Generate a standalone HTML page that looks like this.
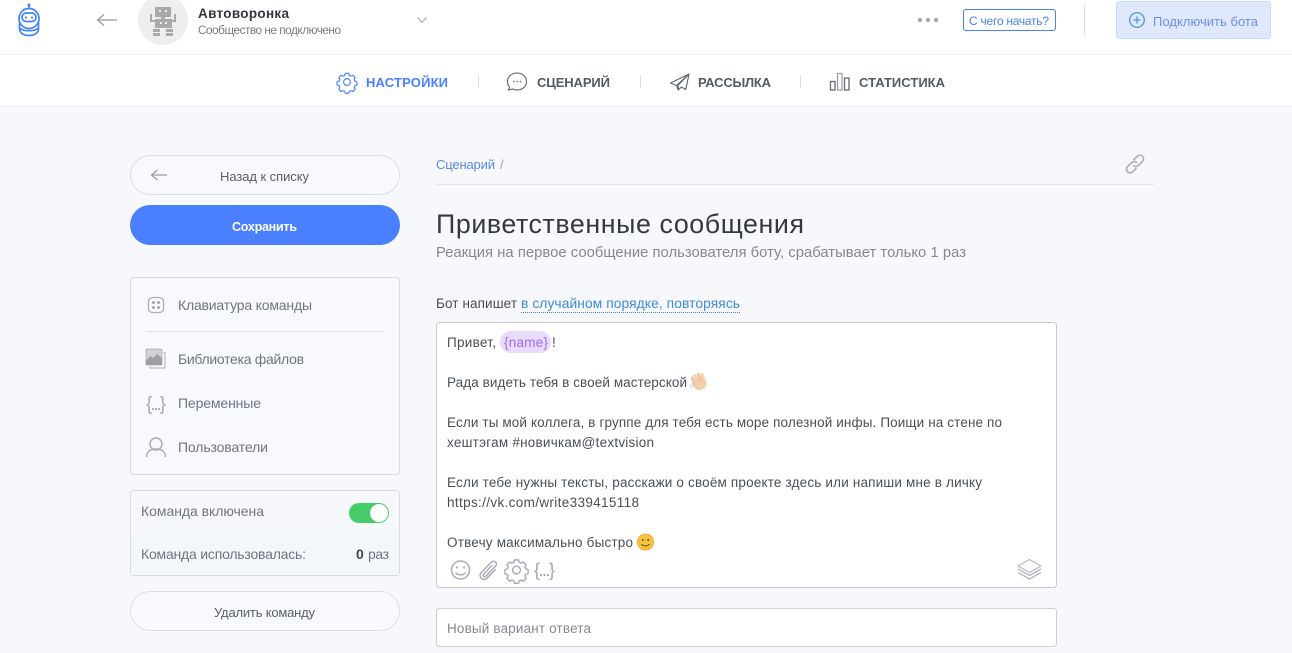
<!DOCTYPE html>
<html lang="ru"><head><meta charset="utf-8"><title>Приветственные сообщения</title>
<style>
html,body{margin:0;padding:0;width:1292px;height:653px;overflow:hidden;background:#f6f8fc}
svg{display:block}
text{font-family:"Liberation Sans","Noto Sans CJK SC",sans-serif;white-space:pre}
.b{font-weight:700}
.s14{font-size:14px}.s13{font-size:13px}
.g{fill:#6f7580}
.ic{fill:none;stroke:#a9adb6;stroke-width:1.5;stroke-linecap:round;stroke-linejoin:round}
.nv{fill:none;stroke:#5d646e;stroke-width:1.1;stroke-linejoin:round;stroke-linecap:round}
</style></head><body>
<svg width="1292" height="653" viewBox="0 0 1292 653" xmlns="http://www.w3.org/2000/svg">
<rect width="1292" height="653" fill="#f6f8fc"/>
<rect width="1292" height="106" fill="#fff"/>
<rect y="54" width="1292" height="1" fill="#eeeeee"/>
<rect y="106" width="1292" height="1" fill="#eceef2"/>

<!-- logo -->
<g fill="none" stroke="#3f83ff" stroke-width="1.700">
<circle cx="29" cy="5" r="1.500" fill="#3f83ff" stroke="none"/><path d="M29 6v3"/>
<circle cx="29" cy="18.500" r="10"/>
<rect x="22" y="13" width="14" height="8.500" rx="4.200"/>
<path d="M19.500 22v6.500c0 4.500 4 7 9.500 7s9.500-2.500 9.500-7V22M20 28.500c4 3 14 3 18 0"/>
</g>
<circle cx="26" cy="17.500" r="1.100" fill="#3f83ff"/><circle cx="32" cy="17.500" r="1.100" fill="#3f83ff"/>
<!-- back arrow -->
<path d="M117 20H98M104 14.500 97.500 20l6.500 5.500" fill="none" stroke="#a8a8a8" stroke-width="1.500"/>
<!-- avatar -->
<circle cx="163" cy="20" r="25" fill="#eeeeee"/>
<g fill="#a9a9a9">
<rect x="155" y="7" width="16" height="10"/><rect x="161" y="17" width="4" height="3"/>
<rect x="155" y="19" width="17" height="9"/>
<rect x="153" y="29" width="7" height="3"/><rect x="153" y="33" width="7" height="3"/>
<rect x="166" y="29" width="7" height="3"/><rect x="166" y="33" width="7" height="3"/>
<path d="M150 14h2v6h3v2h-5zM174 14h2v8h-5v-2h3z"/>
</g>
<rect x="159" y="10" width="2" height="2" fill="#eee"/><rect x="165" y="10" width="2" height="2" fill="#eee"/>
<rect x="160" y="22" width="2" height="2" fill="#eee"/><rect x="165" y="22" width="2" height="2" fill="#eee"/>
<text x="198" y="18" class="b" font-size="13.500" fill="#33363b" textLength="91">Автоворонка</text>
<text x="198" y="34" font-size="11.800" fill="#777b82" textLength="143">Сообщество не подключено</text>
<path d="M417.500 17.500 422 22.500l4.500-5" fill="none" stroke="#a5a8ae" stroke-width="1.100"/>
<circle cx="920" cy="20" r="2.200" fill="#a6a6a6"/><circle cx="928" cy="20" r="2.200" fill="#a6a6a6"/><circle cx="936" cy="20" r="2.200" fill="#a6a6a6"/>
<rect x="963.500" y="9.500" width="92" height="21" rx="2.500" fill="#fff" stroke="#4a80f5"/>
<text x="969" y="25" font-size="12" fill="#4a7ff0" textLength="80">С чего начать?</text>
<rect x="1084" y="5" width="1" height="30" fill="#dddddd"/>
<rect x="1116.500" y="1.500" width="154" height="37" rx="3" fill="#dfe9fb" stroke="#c6daf9"/>
<circle cx="1137" cy="20" r="7.300" fill="none" stroke="#5b9ae6" stroke-width="1.400"/>
<path d="M1137 16.500v7M1133.500 20h7" stroke="#5b9ae6" stroke-width="1.400"/>
<text x="1153" y="26" font-size="13" fill="#6b8eeb" textLength="105">Подключить бота</text>

<!-- nav -->
<g transform="translate(347 82) scale(.84)" fill="none" stroke="#4a7fff" stroke-width="1.400" stroke-linejoin="round">
<circle r="4"/>
<path d="M-2-8.800h4l.8 2.500 1.700.8 2.400-1.100 2.800 2.800-1.100 2.400.7 1.700 2.500.9v4l-2.500.8-.7 1.700 1.100 2.400-2.800 2.800-2.400-1.100-1.700.7-.8 2.500h-4l-.8-2.500-1.700-.7-2.400 1.100-2.800-2.800 1.100-2.400-.7-1.700-2.500-.8v-4l2.500-.9.7-1.700-1.100-2.400 2.800-2.800 2.400 1.100 1.700-.8z" transform="translate(0 -1.500)"/>
</g>
<text x="366" y="87" class="b s13" fill="#4a7fff" textLength="82">НАСТРОЙКИ</text>
<rect x="478" y="75" width="1" height="13" fill="#dcdcdc"/>
<path class="nv" d="M517 73c5.500 0 9.500 3.700 9.500 8.500s-4 8.500-9.500 8.500c-1.800 0-3.400-.4-4.800-1.100-1.300.9-2.800 1.100-4.200 1.100 1-.9 1.500-2 1.500-3-1.500-1.500-2-3.500-2-5.500 0-4.800 4-8.500 9.500-8.500z"/>
<circle cx="514" cy="81.500" r=".8" fill="#5d646e"/><circle cx="517.300" cy="81.500" r=".8" fill="#5d646e"/><circle cx="520.500" cy="81.500" r=".8" fill="#5d646e"/>
<text x="537" y="87" class="b s13" fill="#535b66" textLength="73">СЦЕНАРИЙ</text>
<rect x="640" y="75" width="1" height="13" fill="#dcdcdc"/>
<path class="nv" d="M689 74 670.500 83l6 2.500 1.800 4.500 3-3 4.500 2.500zM689 74 676.500 85.500M689 74 678.300 85v5"/>
<text x="698" y="87" class="b s13" fill="#535b66" textLength="73">РАССЫЛКА</text>
<rect x="800" y="75" width="1" height="13" fill="#dcdcdc"/>
<g fill="none" stroke="#646b75" stroke-width="1.300"><rect x="830.500" y="81.500" width="4.500" height="8.500"/><rect x="837.500" y="73.500" width="4.500" height="16.500" stroke="#9a9fa7"/><rect x="844.500" y="78" width="4.500" height="12"/></g>
<text x="859" y="87" class="b s13" fill="#535b66" textLength="86">СТАТИСТИКА</text>

<!-- left -->
<rect x="130.500" y="155.500" width="269" height="39" rx="19.500" fill="#f8f9fc" stroke="#dddee2"/>
<path d="M167 175H152M157.500 170l-6 5 6 5" fill="none" stroke="#a0a0a0" stroke-width="1.300"/>
<text x="220" y="181" font-size="13" fill="#5a5f68" textLength="89">Назад к списку</text>
<rect x="130" y="205" width="270" height="40" rx="20" fill="#4a80ff"/>
<text x="232" y="231" class="b" font-size="12.500" fill="#fff" textLength="65">Сохранить</text>

<rect x="130.500" y="277.500" width="269" height="197" rx="3" fill="#f8f9fc" stroke="#dadbe0"/>
<rect x="148.500" y="297.500" width="15" height="15" rx="4" fill="none" stroke="#acafb5" stroke-width="1.300"/>
<g fill="#a4a7ad"><circle cx="153.500" cy="302.500" r="1.500"/><circle cx="158.500" cy="302.500" r="1.500"/><circle cx="153.500" cy="307.500" r="1.500"/><circle cx="158.500" cy="307.500" r="1.500"/></g>
<text x="178" y="310" class="s14 g" textLength="134">Клавиатура команды</text>
<rect x="146" y="331" width="238" height="1" fill="#e1e3e8"/>
<rect x="146" y="349" width="16" height="16" rx="1" fill="#d0d1d4" stroke="#a9abb0" stroke-width=".8"/>
<path d="M146 361l4-5 3 2 4-4 5 4v7h-16z" fill="#9d9fa5"/>
<path d="M163.500 352.500h1.500v15.500h-15v-2" fill="none" stroke="#aeb0b5" stroke-width="1"/>
<text x="178" y="364" class="s14 g" textLength="126">Библиотека файлов</text>
<text x="146" y="410" font-size="19" fill="#a9acb2" textLength="20">{...}</text>
<text x="178" y="408" class="s14 g" textLength="83">Переменные</text>
<circle cx="156" cy="444" r="6" fill="none" stroke="#a9acb2" stroke-width="1.500"/>
<path d="M146.500 457c0-5.500 4-8 9.500-8s9.500 2.500 9.500 8" fill="none" stroke="#a9acb2" stroke-width="1.500"/>
<text x="178" y="452" class="s14 g" textLength="90">Пользователи</text>

<rect x="130.500" y="490.500" width="269" height="85" rx="3" fill="#f7f8fc" stroke="#dadbe0"/>
<rect x="131" y="533" width="268" height="42" fill="#f2f7f9"/>
<text x="141" y="516" class="s14 g" textLength="123">Команда включена</text>
<rect x="349" y="503" width="40" height="20" rx="10" fill="#46cd68"/>
<circle cx="379" cy="513" r="9" fill="#fff"/>
<text x="141" y="559" class="s14 g" textLength="165">Команда использовалась:</text>
<text x="356" y="559" class="b s14" fill="#444" textLength="7">0</text>
<text x="368" y="559" class="s14 g" textLength="21">раз</text>
<rect x="130.500" y="591.500" width="269" height="39" rx="19.500" fill="#f8f9fc" stroke="#dddee2"/>
<text x="214" y="617" font-size="13" fill="#5a5f68" textLength="101">Удалить команду</text>

<!-- right -->
<text x="436" y="169" font-size="13" fill="#5a88e6" textLength="59">Сценарий</text>
<text x="500" y="169" font-size="13" fill="#9a9ea6">/</text>
<rect x="436" y="184" width="718" height="1" fill="#e5e6ea"/>
<g fill="none" stroke="#b0b0b0" stroke-width="1.700" stroke-linecap="round">
<path d="M1134 159.500l3-3c1.700-1.700 4.300-1.700 5.500-.3 1.400 1.300 1.300 3.900-.3 5.400l-3.700 3.700c-1.600 1.600-3.900 1.500-5 .2"/>
<path d="M1136 168.500l-3 3c-1.700 1.700-4.300 1.700-5.500.3-1.400-1.300-1.300-3.900.3-5.400l3.700-3.700c1.600-1.600 3.900-1.500 5-.2"/>
</g>
<text x="436" y="233" font-size="26.800" fill="#35393f" textLength="368">Приветственные сообщения</text>
<text x="436" y="257" font-size="14.800" fill="#85898f" textLength="530">Реакция на первое сообщение пользователя боту, срабатывает только 1 раз</text>
<text x="436" y="308" font-size="13.500" fill="#484c53" textLength="81">Бот напишет</text>
<text x="521" y="308" font-size="13.800" fill="#3f8ae0" textLength="219">в случайном порядке, повторяясь</text>
<path d="M521 312.500H740" stroke="#3f8ae0" stroke-dasharray="1 1" fill="none"/>

<rect x="436.500" y="322.500" width="620" height="265" rx="3" fill="#fff" stroke="#c9cace"/>
<g font-size="13.500" fill="#4a4f57">
<text x="447" y="347" textLength="49">Привет,</text>
<rect x="500" y="331" width="51" height="22" rx="11" fill="#e8dbff"/>
<text x="504" y="347" fill="#a26af2" textLength="44">{name}</text>
<text x="552" y="347">!</text>
<text x="447" y="387" textLength="240">Рада видеть тебя в своей мастерской</text>
<text x="447" y="427" textLength="555">Если ты мой коллега, в группе для тебя есть море полезной инфы. Поищи на стене по</text>
<text x="447" y="447" textLength="207">хештэгам #новичкам@textvision</text>
<text x="447" y="487" textLength="535">Если тебе нужны тексты, расскажи о своём проекте здесь или напиши мне в личку</text>
<text x="447" y="507" textLength="192">https://vk.com/write339415118</text>
<text x="447" y="547" textLength="186">Отвечу максимально быстро</text>
</g>
<!-- wave emoji -->
<g transform="rotate(-25 699 383)">
<rect x="693" y="377" width="13" height="13" rx="5" fill="#f3cfae"/>
<rect x="693.500" y="374" width="2.800" height="9" rx="1.400" fill="#eec39c"/>
<rect x="697" y="373" width="2.800" height="9" rx="1.400" fill="#f3cfae"/>
<rect x="700.500" y="373.500" width="2.800" height="9" rx="1.400" fill="#eec39c"/>
<rect x="704" y="375" width="2.600" height="8" rx="1.300" fill="#f3cfae"/>
</g>
<path d="M690 384l2 4M692 383l2 4" stroke="#b9c7d6" stroke-width=".8" fill="none"/>
<!-- smile emoji -->
<circle cx="645.500" cy="542" r="8" fill="#f9c23c" stroke="#e8a020" stroke-width=".8"/>
<circle cx="642.800" cy="540" r="1" fill="#6b4a10"/><circle cx="648.200" cy="540" r="1" fill="#6b4a10"/>
<path d="M641.500 544c1.500 2.500 6.500 2.500 8 0" fill="none" stroke="#6b4a10" stroke-width="1"/>
<!-- toolbar -->
<circle cx="460.500" cy="570" r="9" class="ic"/>
<circle cx="457" cy="567.500" r="1.100" fill="#a9adb6"/><circle cx="464" cy="567.500" r="1.100" fill="#a9adb6"/>
<path class="ic" d="M456 573c2 2.500 7 2.500 9 0" stroke-width="1.300"/>
<path class="ic" stroke-width="1.700" transform="translate(1.500 0)" d="M494 569.500l-8.500 8.700c-3.800 3.800-9.500-1.700-5.600-5.800l10-10.300c2.700-2.700 6.800 1.300 4.100 4.100l-9.700 10c-1.500 1.500-3.500-.5-2.100-2l8.300-8.700"/>
<g transform="translate(516.500 570) scale(.98)"><circle r="4" class="ic" stroke-width="1.700"/>
<path class="ic" stroke-width="1.700" transform="translate(0 -1.500)" d="M-2-8.800h4l.8 2.500 1.700.8 2.400-1.100 2.800 2.800-1.100 2.400.7 1.700 2.500.9v4l-2.500.8-.7 1.700 1.100 2.400-2.800 2.800-2.400-1.100-1.700.7-.8 2.500h-4l-.8-2.500-1.700-.7-2.400 1.100-2.800-2.800 1.100-2.400-.7-1.700-2.500-.8v-4l2.500-.9.7-1.700-1.100-2.400 2.800-2.800 2.400 1.100 1.700-.8z"/></g>
<text x="534" y="576" font-size="18" fill="#a0a4ad" textLength="21">{...}</text>
<g fill="none" stroke="#b4b8c4" stroke-width="1.100" stroke-linejoin="round">
<path d="M1029.500 559.500 1041 566l-11.500 6.500L1018 566z"/>
<path d="M1018 569l11.500 6.500L1041 569M1018 572.500l11.500 6.500 11.500-6.500" stroke-width="1.300"/>
</g>

<rect x="436.500" y="608.500" width="620" height="38" rx="3" fill="#fff" stroke="#cfd0d4"/>
<text x="447" y="633" font-size="13.500" fill="#858991" textLength="144">Новый вариант ответа</text>
</svg>
</body></html>
